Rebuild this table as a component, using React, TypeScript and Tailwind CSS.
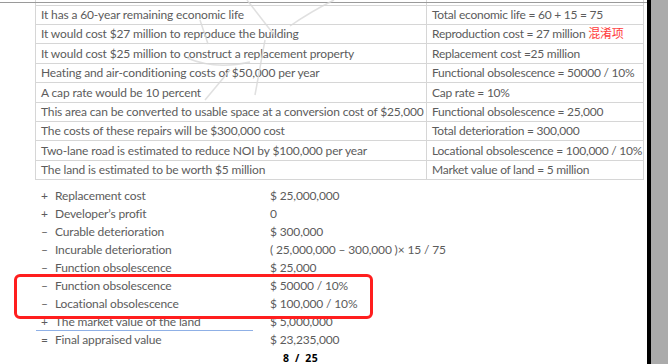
import React from "react";

const rows: { l: string; r: React.ReactNode; h: string }[] = [
  { l: "It has a 60-year remaining economic life", r: "Total economic life = 60 + 15 = 75", h: "h-[19px]" },
  {
    l: "It would cost $27 million to reproduce the building",
    r: (
      <>
        Reproduction cost = 27 million <span className="text-[#ff3b3b]">混淆项</span>
      </>
    ),
    h: "h-[19px]",
  },
  { l: "It would cost $25 million to construct a replacement property", r: "Replacement cost =25 million", h: "h-[20px]" },
  { l: "Heating and air-conditioning costs of $50,000 per year", r: "Functional obsolescence = 50000 / 10%", h: "h-[19px]" },
  { l: "A cap rate would be 10 percent", r: "Cap rate = 10%", h: "h-[20px]" },
  { l: "This area can be converted to usable space at a conversion cost of $25,000", r: "Functional obsolescence = 25,000", h: "h-[19px]" },
  { l: "The costs of these repairs will be $300,000 cost", r: "Total deterioration = 300,000", h: "h-[19px]" },
  { l: "Two-lane road is estimated to reduce NOI by $100,000 per year", r: "Locational obsolescence = 100,000 / 10%", h: "h-[20px]" },
  { l: "The land is estimated to be worth $5 million", r: "Market value of land = 5 million", h: "h-[19px]" },
];

function Line({ s, label, value }: { s: string; label: string; value: string }) {
  return (
    <div className="flex h-[18px] items-center whitespace-nowrap">
      <span className="w-[17px] shrink-0 pl-[3px]">{s}</span>
      <span className="w-[215px] shrink-0">{label}</span>
      <span className="shrink-0">{value}</span>
    </div>
  );
}

export default function App() {
  return (
    <div
      className="flex h-[364px] w-[668px] overflow-hidden bg-white text-[12px] tracking-[-0.15px] text-[#5c5c5c]"
      style={{ fontFamily: "Lato, 'Noto Sans CJK SC', sans-serif" }}
    >
      <div className="relative h-full w-[647px] shrink-0 overflow-hidden bg-white">
        {/* table */}
        <div className="ml-[35px] w-[609px] pt-[7px]">
          <div className="-mt-[20px] flex h-[19px] border-x border-b border-[#d6d6d6] leading-[12px]">
            <div className="w-[391px] shrink-0 border-r border-[#d6d6d6] pl-[5px] whitespace-nowrap">
              The building has an effective age of 15 years
            </div>
            <div className="min-w-0 flex-1 pl-[5px] whitespace-nowrap">Effective age = 15 years</div>
          </div>
          {rows.map((r, i) => (
            <div key={i} className={`flex ${r.h} items-center border-x border-b border-[#d6d6d6]`}>
              <div className="flex h-full w-[391px] shrink-0 items-center border-r border-[#d6d6d6] pl-[5px] whitespace-nowrap">
                {r.l}
              </div>
              <div className="min-w-0 flex-1 pl-[5px] tracking-[-0.25px] whitespace-nowrap">{r.r}</div>
            </div>
          ))}
        </div>

        {/* list */}
        <div className="mt-[7px] pl-[38px]">
          <Line s="+" label="Replacement cost" value="$ 25,000,000" />
          <Line s="+" label="Developer’s profit" value="0" />
          <Line s="–" label="Curable deterioration" value="$ 300,000" />
          <Line s="–" label="Incurable deterioration" value="( 25,000,000 – 300,000 )× 15 / 75" />
          <Line s="–" label="Function obsolescence" value="$ 25,000" />
          <div className="h-[36px]" />
          <div className="-ml-[2px] h-[18px] w-[217px] border-b border-[#8fb0e6] pl-[2px]">
            <div className="-mb-[1px]">
              <Line s="+" label="The market value of the land" value="$ 5,000,000" />
            </div>
          </div>
          <Line s="=" label="Final appraised value" value="$ 23,235,000" />
        </div>

        <div
          className="mt-[2px] pl-[283px] text-[10.5px] font-bold leading-[14px] tracking-[0.6px] text-black"
          style={{ fontFamily: "'Noto Sans', sans-serif", wordSpacing: "2px" }}
        >
          8 / 25
        </div>

        {/* red highlight overlay */}
        <div className="absolute left-[14px] top-[274px] h-[45px] w-[359px] rounded-[6px] border-[3px] border-[#ff1e1e] bg-white pl-[21px]">
          <Line s="–" label="Function obsolescence" value="$ 50000 / 10%" />
          <Line s="–" label="Locational obsolescence" value="$ 100,000 / 10%" />
        </div>

        {/* top window line */}
        <div className="absolute left-0 top-[2px] h-[1px] w-full bg-[#9a9a9a]" />

        {/* watermark */}
        <svg className="pointer-events-none absolute left-0 top-0" width="647" height="120">
          <g stroke="#d9d9d9" strokeWidth="1.5" fill="none" opacity="0.8">
            <path d="M247 0 L275 36" />
            <path d="M290 26 Q310 12 334 0" />
            <path d="M200 20 L208 44" />
            <path d="M187 58 Q215 70 250 62" />
            <path d="M205 100 L230 70" />
            <path d="M265 40 L255 95" />
          </g>
        </svg>
      </div>
      <div className="h-full w-[4px] shrink-0 bg-black" />
      <div className="h-full flex-1 bg-[#ababab]" />
    </div>
  );
}
